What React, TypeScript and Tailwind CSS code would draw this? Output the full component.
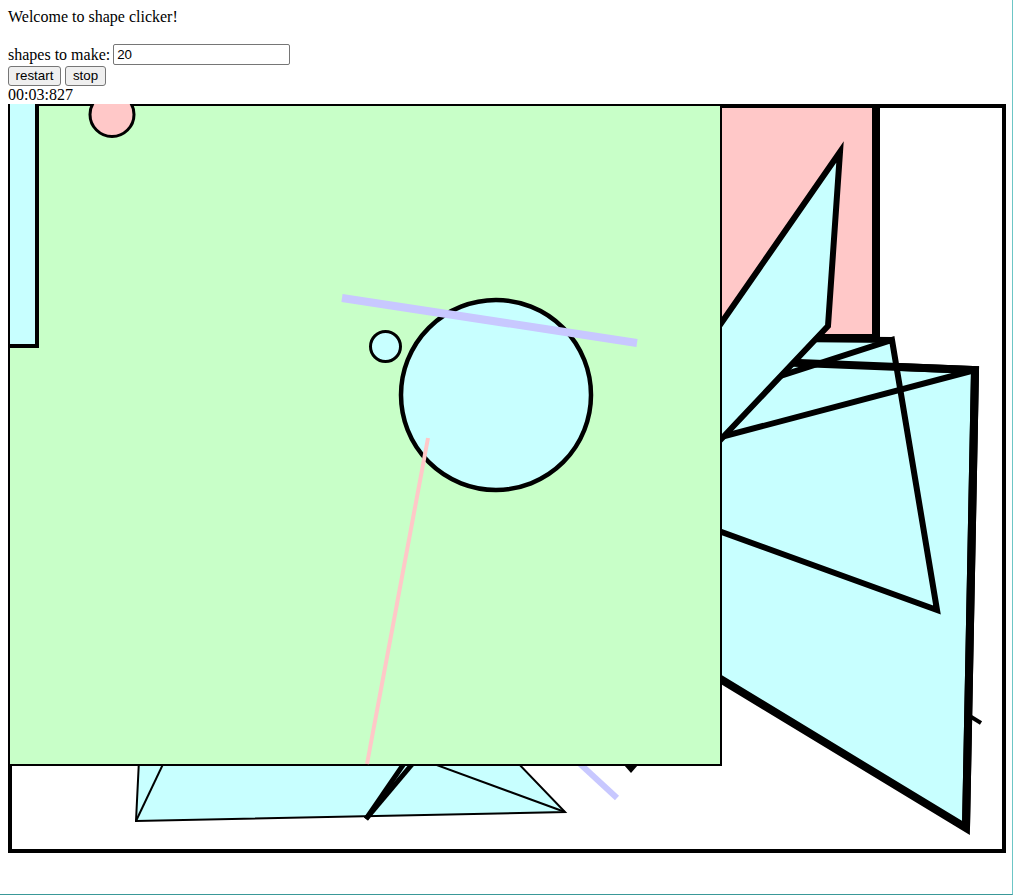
import React from 'react';

const CYAN = '#c8ffff';
const GREEN = '#c8ffc8';
const PINK = '#ffc8c8';
const LAVENDER = '#c8c8ff';

// shapes are drawn in page coordinates (viewBox starts where the canvas sits)
function ShapeCanvas() {
  return (
    <svg width={1000} height={750} viewBox="8 104 1000 750" className="block">
      {/* back frame */}
      <rect x={10} y={106} width={994} height={745} fill="white" stroke="black" strokeWidth={4} />
      <line x1={955} y1={707} x2={981} y2={723} stroke="black" strokeWidth={4} />

      {/* right cluster */}
      <polygon points="600,355 975,370 966,828 600,606" fill={CYAN} stroke="black" strokeWidth={8} />
      <polygon points="600,434 892,340 937,610 600,488" fill={CYAN} />
      <polygon points="600,338 892,340 600,434" fill={CYAN} />
      <polyline points="600,355 975,370 966,828" fill="none" stroke="black" strokeWidth={8} />
      <polyline points="975,370 600,469" fill="none" stroke="black" strokeWidth={6} />
      <polyline points="600,434 892,340 937,610 600,488" fill="none" stroke="black" strokeWidth={6} />
      <polyline points="700,338 892,340" fill="none" stroke="black" strokeWidth={6} />

      <rect x={600} y={104} width={276} height={234} fill={PINK} stroke="black" strokeWidth={8} />
      <polygon points="840,152 828,326 640,525 640,440" fill={CYAN} stroke="black" strokeWidth={6} />

      {/* bottom pieces, partly under the green block */}
      <polygon points="139,760 136,821 565,812 515,760" fill={CYAN} stroke="black" strokeWidth={2} />
      <line x1={136} y1={821} x2={165} y2={760} stroke="black" strokeWidth={2} />
      <line x1={565} y1={812} x2={423} y2={760} stroke="black" strokeWidth={2} />
      <line x1={366} y1={819} x2={405} y2={762} stroke="black" strokeWidth={5} />
      <line x1={366} y1={819} x2={414} y2={762} stroke="black" strokeWidth={5} />
      <line x1={500} y1={690} x2={617} y2={798} stroke={LAVENDER} strokeWidth={6} />
      <polygon points="624,765 638,765 631,773" fill="black" />

      {/* green block and what sits on it */}
      <rect x={9} y={105} width={712} height={660} fill={GREEN} stroke="black" strokeWidth={2} />
      <rect x={8} y={102} width={29} height={244} fill={CYAN} stroke="black" strokeWidth={4} />
      <circle cx={112} cy={114.5} r={22} fill={PINK} stroke="black" strokeWidth={3} />
      <circle cx={385.5} cy={346.5} r={15} fill={CYAN} stroke="black" strokeWidth={3} />
      <circle cx={496} cy={395} r={95} fill={CYAN} stroke="black" strokeWidth={4.5} />
      <line x1={342} y1={298} x2={637} y2={343} stroke={LAVENDER} strokeWidth={8} />
      <line x1={428} y1={438} x2={367} y2={764} stroke={PINK} strokeWidth={4} />
    </svg>
  );
}

export default function App() {
  return (
    <div className="w-[1013px] h-[895px] bg-white border-r border-b border-r-[#6cc6c6] border-b-[#3a9898] px-2 pt-2 overflow-hidden font-['Liberation_Serif',serif] text-[16px] text-black">
      <p className="h-[18px] leading-[18px]">Welcome to shape clicker!</p>

      <div className="flex items-center h-[21px] mt-[18px]">
        <span className="leading-[18px] mr-[3px]">shapes to make:</span>
        <div className="w-[177px] h-[21px] border border-[#767676] rounded-[2px] px-[3px] flex items-center font-['Liberation_Sans',sans-serif] text-[13.33px]">
          20
        </div>
      </div>

      <div className="flex gap-[4px] mt-[1px]">
        <div className="h-[20px] w-[53px] flex items-center justify-center bg-[#efefef] border border-[#767676] rounded-[3px] font-['Liberation_Sans',sans-serif] text-[13.33px]">
          restart
        </div>
        <div className="h-[20px] w-[41px] flex items-center justify-center bg-[#efefef] border border-[#767676] rounded-[3px] font-['Liberation_Sans',sans-serif] text-[13.33px]">
          stop
        </div>
      </div>

      <div className="h-[18px] leading-[18px]">00:03:827</div>

      <ShapeCanvas />
    </div>
  );
}
